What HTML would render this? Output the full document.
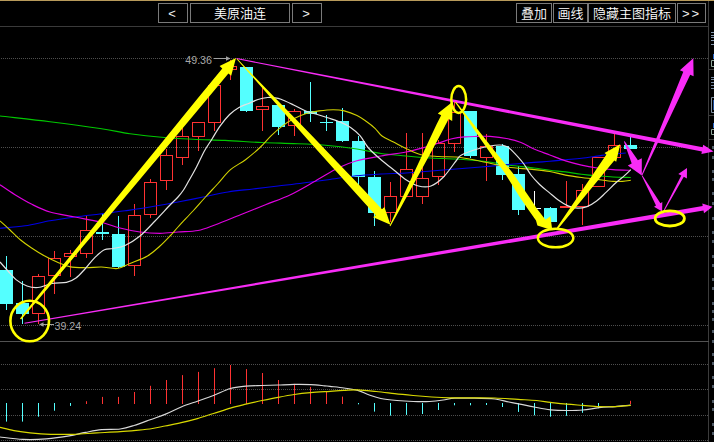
<!DOCTYPE html>
<html lang="zh"><head><meta charset="utf-8"><title>美原油连</title>
<style>
html,body{margin:0;padding:0;background:#000;overflow:hidden}
svg{display:block}
.cj{font-family:"Liberation Sans","Noto Sans CJK SC",sans-serif;font-size:13px;font-weight:350;fill:#fff}
.lat{font-family:"Liberation Sans","Noto Sans CJK SC",sans-serif;font-size:13px;fill:#f0f0f0;letter-spacing:2px}
.num{font-family:"Liberation Sans","Noto Sans CJK SC",sans-serif;font-size:10.67px;fill:#a8a8a8}
</style></head><body>
<svg width="714" height="442" viewBox="0 0 714 442">
<rect x="0" y="0" width="714" height="442" fill="#000"/>
<rect x="0" y="0" width="714" height="1" fill="#b89a5a"/>
<rect x="0" y="26" width="709" height="1" fill="#3a3a3a"/>
<rect x="708" y="1" width="1" height="441" fill="#3c3c3c"/>
<rect x="0" y="341" width="709" height="1" fill="#525252"/>
<line x1="1" y1="58.5" x2="708" y2="58.5" stroke="#4e4e4e" stroke-width="1" stroke-dasharray="1 1" shape-rendering="crispEdges"/>
<line x1="1" y1="147.5" x2="708" y2="147.5" stroke="#4e4e4e" stroke-width="1" stroke-dasharray="1 1" shape-rendering="crispEdges"/>
<line x1="1" y1="236.5" x2="708" y2="236.5" stroke="#4e4e4e" stroke-width="1" stroke-dasharray="1 1" shape-rendering="crispEdges"/>
<line x1="1" y1="325.5" x2="708" y2="325.5" stroke="#4e4e4e" stroke-width="1" stroke-dasharray="1 1" shape-rendering="crispEdges"/>
<line x1="1" y1="364.5" x2="708" y2="364.5" stroke="#4e4e4e" stroke-width="1" stroke-dasharray="1 1" shape-rendering="crispEdges"/>
<line x1="1" y1="389.5" x2="708" y2="389.5" stroke="#4e4e4e" stroke-width="1" stroke-dasharray="1 1" shape-rendering="crispEdges"/>
<line x1="1" y1="415.5" x2="708" y2="415.5" stroke="#4e4e4e" stroke-width="1" stroke-dasharray="1 1" shape-rendering="crispEdges"/>
<line x1="1" y1="440.5" x2="708" y2="440.5" stroke="#4e4e4e" stroke-width="1" stroke-dasharray="1 1" shape-rendering="crispEdges"/>
<rect x="709" y="69" width="5" height="1" fill="#3c3c3c"/>
<rect x="709" y="115" width="5" height="1" fill="#3c3c3c"/>
<rect x="709" y="139" width="5" height="1" fill="#3c3c3c"/>
<rect x="711" y="32" width="3" height="1" fill="#8396ad"/>
<rect x="711" y="35" width="3" height="1" fill="#8396ad"/>
<rect x="711" y="37" width="3" height="1" fill="#8396ad"/>
<rect x="711" y="40" width="3" height="1" fill="#8396ad"/>
<rect x="711" y="44" width="3" height="1" fill="#8396ad"/>
<rect x="713" y="54" width="1" height="5" fill="#2464c8"/>
<path d="M714 60.5H711.5V66.5H714" fill="none" stroke="#8fa79b" stroke-width="1"/>
<rect x="711" y="77" width="3" height="1" fill="#7386a0"/>
<rect x="711" y="79" width="3" height="1" fill="#7386a0"/>
<rect x="711" y="82" width="3" height="1" fill="#7386a0"/>
<rect x="711" y="85" width="3" height="1" fill="#7386a0"/>
<rect x="711" y="88" width="3" height="1" fill="#7386a0"/>
<path d="M714 97.5H711.5V112.5H714" fill="none" stroke="#7f8f9f" stroke-width="1"/>
<rect x="713" y="100" width="1" height="10" fill="#1c4c9c"/>
<rect x="713" y="123" width="1" height="5" fill="#2464c8"/>
<path d="M714 129.5H711.5V134.5H714" fill="none" stroke="#8fa79b" stroke-width="1"/>
<rect x="712" y="146" width="2" height="3" fill="#4d5864"/>
<rect x="712" y="156" width="2" height="3" fill="#4d5864"/>
<rect x="712" y="170" width="2" height="3" fill="#4d5864"/>
<rect x="712" y="178" width="2" height="3" fill="#4d5864"/>
<rect x="712" y="192" width="2" height="3" fill="#4d5864"/>
<rect x="712" y="202" width="2" height="3" fill="#4d5864"/>
<rect x="712" y="217" width="2" height="3" fill="#4d5864"/>
<rect x="712" y="231" width="2" height="3" fill="#4d5864"/>
<rect x="712" y="240" width="2" height="3" fill="#4d5864"/>
<rect x="712" y="255" width="2" height="3" fill="#4d5864"/>
<rect x="712" y="264" width="2" height="3" fill="#4d5864"/>
<rect x="712" y="278" width="2" height="3" fill="#4d5864"/>
<rect x="712" y="287" width="2" height="3" fill="#4d5864"/>
<rect x="712" y="302" width="2" height="3" fill="#4d5864"/>
<rect x="712" y="310" width="2" height="3" fill="#4d5864"/>
<rect x="712" y="318" width="2" height="3" fill="#4d5864"/>
<rect x="712" y="330" width="2" height="3" fill="#4d5864"/>
<rect x="712" y="340" width="2" height="3" fill="#4d5864"/>
<rect x="712" y="353" width="2" height="3" fill="#4d5864"/>
<rect x="712" y="362" width="2" height="3" fill="#4d5864"/>
<rect x="712" y="376" width="2" height="3" fill="#4d5864"/>
<rect x="712" y="385" width="2" height="3" fill="#4d5864"/>
<rect x="712" y="400" width="2" height="3" fill="#4d5864"/>
<rect x="712" y="408" width="2" height="3" fill="#4d5864"/>
<rect x="712" y="423" width="2" height="3" fill="#4d5864"/>
<rect x="712" y="432" width="2" height="3" fill="#4d5864"/>
<rect x="158.5" y="3.5" width="29.0" height="19" fill="none" stroke="#7a7a7a" stroke-width="1"/>
<text class="lat" x="173.0" y="18" text-anchor="middle">&lt;</text>
<rect x="190.5" y="3.5" width="99.0" height="19" fill="none" stroke="#7a7a7a" stroke-width="1"/>
<text class="cj" x="240.0" y="18" text-anchor="middle">美原油连</text>
<rect x="292.5" y="3.5" width="29.0" height="19" fill="none" stroke="#7a7a7a" stroke-width="1"/>
<text class="lat" x="307.0" y="18" text-anchor="middle">&gt;</text>
<rect x="516.5" y="3.5" width="35.0" height="19" fill="none" stroke="#7a7a7a" stroke-width="1"/>
<text class="cj" x="534.0" y="18" text-anchor="middle">叠加</text>
<rect x="553.5" y="3.5" width="34.0" height="19" fill="none" stroke="#7a7a7a" stroke-width="1"/>
<text class="cj" x="570.5" y="18" text-anchor="middle">画线</text>
<rect x="588.5" y="3.5" width="87.0" height="19" fill="none" stroke="#7a7a7a" stroke-width="1"/>
<text class="cj" x="632.0" y="18" text-anchor="middle">隐藏主图指标</text>
<rect x="677.5" y="3.5" width="28.0" height="19" fill="none" stroke="#7a7a7a" stroke-width="1"/>
<text class="lat" x="691.5" y="18" text-anchor="middle">&gt;&gt;</text>
<rect x="6.0" y="256.0" width="1" height="54.0" fill="#54ffff"/>
<rect x="0.0" y="270.0" width="13" height="34.0" fill="#54ffff"/>
<rect x="22.0" y="281.0" width="1" height="43.0" fill="#54ffff"/>
<rect x="16.0" y="303.0" width="13" height="11.0" fill="#54ffff"/>
<rect x="38.0" y="274.0" width="1" height="2.0" fill="#ff3232"/>
<rect x="38.0" y="314.0" width="1" height="10.0" fill="#ff3232"/>
<rect x="32.5" y="276.5" width="12" height="37.0" fill="none" stroke="#ff3232" stroke-width="1"/>
<rect x="54.0" y="251.0" width="1" height="7.0" fill="#ff3232"/>
<rect x="54.0" y="276.0" width="1" height="18.0" fill="#ff3232"/>
<rect x="48.5" y="258.5" width="12" height="17.0" fill="none" stroke="#ff3232" stroke-width="1"/>
<rect x="70.0" y="250.0" width="1" height="3.0" fill="#ff3232"/>
<rect x="70.0" y="257.0" width="1" height="20.0" fill="#ff3232"/>
<rect x="64.5" y="253.5" width="12" height="3.0" fill="none" stroke="#ff3232" stroke-width="1"/>
<rect x="86.0" y="216.0" width="1" height="14.0" fill="#ff3232"/>
<rect x="86.0" y="254.0" width="1" height="4.0" fill="#ff3232"/>
<rect x="80.5" y="230.5" width="12" height="23.0" fill="none" stroke="#ff3232" stroke-width="1"/>
<rect x="102.0" y="214.0" width="1" height="26.0" fill="#54ffff"/>
<rect x="96.0" y="232.0" width="13" height="2.0" fill="#54ffff"/>
<rect x="118.0" y="216.0" width="1" height="52.0" fill="#54ffff"/>
<rect x="112.0" y="234.0" width="13" height="33.0" fill="#54ffff"/>
<rect x="134.0" y="204.0" width="1" height="11.0" fill="#ff3232"/>
<rect x="134.0" y="266.0" width="1" height="10.0" fill="#ff3232"/>
<rect x="128.5" y="215.5" width="12" height="50.0" fill="none" stroke="#ff3232" stroke-width="1"/>
<rect x="150.0" y="179.0" width="1" height="3.0" fill="#ff3232"/>
<rect x="150.0" y="215.0" width="1" height="3.0" fill="#ff3232"/>
<rect x="144.5" y="182.5" width="12" height="32.0" fill="none" stroke="#ff3232" stroke-width="1"/>
<rect x="166.0" y="149.0" width="1" height="6.0" fill="#ff3232"/>
<rect x="166.0" y="181.0" width="1" height="9.0" fill="#ff3232"/>
<rect x="160.5" y="155.5" width="12" height="25.0" fill="none" stroke="#ff3232" stroke-width="1"/>
<rect x="182.0" y="128.0" width="1" height="8.0" fill="#ff3232"/>
<rect x="182.0" y="158.0" width="1" height="7.0" fill="#ff3232"/>
<rect x="176.5" y="136.5" width="12" height="21.0" fill="none" stroke="#ff3232" stroke-width="1"/>
<rect x="198.0" y="137.0" width="1" height="14.0" fill="#ff3232"/>
<rect x="192.5" y="122.5" width="12" height="14.0" fill="none" stroke="#ff3232" stroke-width="1"/>
<rect x="214.0" y="81.0" width="1" height="4.0" fill="#ff3232"/>
<rect x="214.0" y="123.0" width="1" height="8.0" fill="#ff3232"/>
<rect x="208.5" y="85.5" width="12" height="37.0" fill="none" stroke="#ff3232" stroke-width="1"/>
<rect x="230.0" y="60.0" width="1" height="6.0" fill="#ff3232"/>
<rect x="230.0" y="70.0" width="1" height="10.0" fill="#ff3232"/>
<rect x="224.5" y="66.5" width="12" height="3.0" fill="none" stroke="#ff3232" stroke-width="1"/>
<rect x="246.0" y="67.0" width="1" height="45.0" fill="#54ffff"/>
<rect x="240.0" y="67.0" width="13" height="44.0" fill="#54ffff"/>
<rect x="262.0" y="86.0" width="1" height="20.0" fill="#ff3232"/>
<rect x="262.0" y="110.0" width="1" height="21.0" fill="#ff3232"/>
<rect x="256.5" y="106.5" width="12" height="3.0" fill="none" stroke="#ff3232" stroke-width="1"/>
<rect x="278.0" y="105.0" width="1" height="30.0" fill="#54ffff"/>
<rect x="272.0" y="105.0" width="13" height="22.0" fill="#54ffff"/>
<rect x="294.0" y="109.0" width="1" height="2.0" fill="#ff3232"/>
<rect x="294.0" y="126.0" width="1" height="10.0" fill="#ff3232"/>
<rect x="288.5" y="111.5" width="12" height="14.0" fill="none" stroke="#ff3232" stroke-width="1"/>
<rect x="310.0" y="82.0" width="1" height="40.0" fill="#54ffff"/>
<rect x="304.0" y="111.0" width="13" height="3.0" fill="#54ffff"/>
<rect x="326.0" y="115.0" width="1" height="16.0" fill="#54ffff"/>
<rect x="320.0" y="122.0" width="13" height="1.0" fill="#54ffff"/>
<rect x="342.0" y="108.0" width="1" height="34.0" fill="#54ffff"/>
<rect x="336.0" y="121.0" width="13" height="20.0" fill="#54ffff"/>
<rect x="358.0" y="136.0" width="1" height="49.0" fill="#54ffff"/>
<rect x="352.0" y="141.0" width="13" height="36.0" fill="#54ffff"/>
<rect x="374.0" y="171.0" width="1" height="55.0" fill="#54ffff"/>
<rect x="368.0" y="177.0" width="13" height="36.0" fill="#54ffff"/>
<rect x="390.0" y="182.0" width="1" height="14.0" fill="#ff3232"/>
<rect x="390.0" y="213.0" width="1" height="9.0" fill="#ff3232"/>
<rect x="384.5" y="196.5" width="12" height="16.0" fill="none" stroke="#ff3232" stroke-width="1"/>
<rect x="406.0" y="133.0" width="1" height="36.0" fill="#ff3232"/>
<rect x="400.5" y="169.5" width="12" height="27.0" fill="none" stroke="#ff3232" stroke-width="1"/>
<rect x="422.0" y="133.0" width="1" height="45.0" fill="#ff3232"/>
<rect x="422.0" y="197.0" width="1" height="7.0" fill="#ff3232"/>
<rect x="416.5" y="178.5" width="12" height="18.0" fill="none" stroke="#ff3232" stroke-width="1"/>
<rect x="438.0" y="140.0" width="1" height="3.0" fill="#ff3232"/>
<rect x="438.0" y="177.0" width="1" height="8.0" fill="#ff3232"/>
<rect x="432.5" y="143.5" width="12" height="33.0" fill="none" stroke="#ff3232" stroke-width="1"/>
<rect x="454.0" y="102.0" width="1" height="10.0" fill="#ff3232"/>
<rect x="454.0" y="144.0" width="1" height="8.0" fill="#ff3232"/>
<rect x="448.5" y="112.5" width="12" height="31.0" fill="none" stroke="#ff3232" stroke-width="1"/>
<rect x="470.0" y="111.0" width="1" height="47.0" fill="#54ffff"/>
<rect x="464.0" y="111.0" width="13" height="45.0" fill="#54ffff"/>
<rect x="486.0" y="134.0" width="1" height="12.0" fill="#ff3232"/>
<rect x="486.0" y="158.0" width="1" height="23.0" fill="#ff3232"/>
<rect x="480.5" y="146.5" width="12" height="11.0" fill="none" stroke="#ff3232" stroke-width="1"/>
<rect x="502.0" y="144.0" width="1" height="36.0" fill="#54ffff"/>
<rect x="496.0" y="146.0" width="13" height="29.0" fill="#54ffff"/>
<rect x="518.0" y="166.0" width="1" height="49.0" fill="#54ffff"/>
<rect x="512.0" y="174.0" width="13" height="36.0" fill="#54ffff"/>
<rect x="534.0" y="191.0" width="1" height="27.0" fill="#fff"/>
<rect x="528.0" y="208.0" width="13" height="1" fill="#fff"/>
<rect x="550.0" y="207.0" width="1" height="15.0" fill="#54ffff"/>
<rect x="544.0" y="208.0" width="13" height="14.0" fill="#54ffff"/>
<rect x="566.0" y="181.0" width="1" height="25.0" fill="#ff3232"/>
<rect x="560.5" y="206.5" width="12" height="1.0" fill="none" stroke="#ff3232" stroke-width="1"/>
<rect x="582.0" y="184.0" width="1" height="6.0" fill="#ff3232"/>
<rect x="582.0" y="207.0" width="1" height="18.0" fill="#ff3232"/>
<rect x="576.5" y="190.5" width="12" height="16.0" fill="none" stroke="#ff3232" stroke-width="1"/>
<rect x="592.5" y="157.5" width="12" height="29.0" fill="none" stroke="#ff3232" stroke-width="1"/>
<rect x="614.0" y="133.0" width="1" height="12.0" fill="#ff3232"/>
<rect x="608.5" y="145.5" width="12" height="12.0" fill="none" stroke="#ff3232" stroke-width="1"/>
<rect x="630.0" y="136.0" width="1" height="13.0" fill="#54ffff"/>
<rect x="624.0" y="145.0" width="13" height="4.0" fill="#54ffff"/>
<path d="M0.0 116.0C8.3 117.0 33.3 119.6 50.0 121.7C66.7 123.8 86.7 126.5 100.0 128.5C113.3 130.5 119.7 132.2 130.0 133.7C140.3 135.1 151.0 136.3 161.6 137.2C172.2 138.1 182.7 138.8 193.3 139.3C203.9 139.8 213.6 139.9 225.0 140.4C236.4 140.9 250.6 142.0 262.0 142.5C273.4 143.0 283.1 143.2 293.6 143.6C304.2 144.0 314.7 144.3 325.3 145.2C335.9 146.1 347.7 147.6 357.0 149.0C366.3 150.4 372.8 152.3 381.0 153.5C389.2 154.7 397.7 155.2 406.0 156.0C414.3 156.8 422.7 157.5 431.0 158.0C439.3 158.5 447.7 158.5 456.0 159.0C464.3 159.5 472.7 160.1 481.0 161.0C489.3 161.9 497.2 163.5 506.0 164.7C514.8 165.9 526.7 167.1 534.0 168.0C541.3 168.9 544.5 169.7 549.8 170.3C555.1 171.0 560.3 171.2 565.6 171.9C570.9 172.6 576.2 173.6 581.5 174.3C586.8 175.0 592.0 175.5 597.3 175.9C602.5 176.3 607.4 176.7 613.0 177.0C618.6 177.3 627.8 177.4 630.8 177.5" fill="none" stroke="#00c800" stroke-width="1.10"/>
<path d="M0.0 228.3C4.2 227.9 16.7 227.1 25.0 225.8C33.3 224.6 41.7 222.3 50.0 220.8C58.3 219.3 66.7 218.1 75.0 217.0C83.3 215.9 91.7 215.0 100.0 214.0C108.3 213.0 116.7 212.0 125.0 210.8C133.3 209.6 141.2 208.5 150.0 207.0C158.8 205.5 169.2 203.7 178.0 202.0C186.8 200.3 194.7 198.7 203.0 197.0C211.3 195.3 219.7 193.3 228.0 192.0C236.3 190.7 244.7 190.0 253.0 189.0C261.3 188.0 269.7 187.0 278.0 186.0C286.3 185.0 294.7 184.1 303.0 183.0C311.3 181.9 319.2 180.9 328.0 179.7C336.8 178.5 347.2 176.8 356.0 175.8C364.8 174.9 372.7 174.5 381.0 174.0C389.3 173.5 397.7 173.5 406.0 173.0C414.3 172.5 422.7 171.7 431.0 171.0C439.3 170.3 447.7 169.7 456.0 169.0C464.3 168.3 472.7 167.7 481.0 167.0C489.3 166.3 497.2 165.5 506.0 164.7C514.8 163.9 526.7 163.0 534.0 162.4C541.3 161.8 544.5 161.8 549.8 161.3C555.1 160.9 560.3 160.2 565.6 159.7C570.9 159.2 576.2 158.8 581.5 158.2C586.8 157.6 592.8 156.7 597.3 156.1C601.8 155.5 603.6 155.0 608.4 154.5C613.1 154.0 622.9 153.2 625.8 153.0" fill="none" stroke="#0000e6" stroke-width="1.15"/>
<path d="M0.0 184.7C2.5 186.4 9.6 191.4 15.0 194.7C20.4 198.0 26.6 201.7 32.4 204.6C38.2 207.5 42.9 209.9 50.0 212.0C57.1 214.1 66.7 215.3 75.0 217.0C83.3 218.7 92.5 220.2 100.0 222.0C107.5 223.8 113.3 226.3 120.0 228.0C126.7 229.7 133.3 231.1 140.0 232.0C146.7 232.9 153.7 233.3 160.0 233.3C166.3 233.3 171.7 232.5 178.0 232.0C184.3 231.5 191.8 231.7 198.0 230.5C204.2 229.3 208.4 227.3 215.5 224.7C222.6 222.1 232.2 218.0 240.5 214.7C248.8 211.4 257.2 208.0 265.5 204.7C273.8 201.4 282.2 198.6 290.5 194.7C298.8 190.8 307.6 185.4 315.5 181.0C323.4 176.6 331.2 171.3 338.0 168.0C344.8 164.7 348.8 163.0 356.0 161.0C363.2 159.0 372.7 157.5 381.0 156.0C389.3 154.5 398.5 153.5 406.0 152.0C413.5 150.5 420.4 148.5 426.0 147.0C431.6 145.5 435.0 144.2 439.3 142.8C443.6 141.4 447.8 139.8 452.0 138.8C456.2 137.8 460.4 137.3 464.6 136.9C468.8 136.5 473.1 136.5 477.3 136.4C481.5 136.3 484.9 136.0 490.0 136.4C495.1 136.8 502.8 137.8 508.0 138.8C513.2 139.8 516.7 140.8 521.0 142.5C525.3 144.2 529.2 146.9 534.0 149.0C538.8 151.1 544.5 153.0 549.8 155.0C555.1 157.0 560.3 159.2 565.6 160.9C570.9 162.6 576.2 163.9 581.5 165.1C586.8 166.3 592.0 167.2 597.3 168.0C602.5 168.8 607.5 169.2 613.0 169.6C618.5 170.0 627.6 170.2 630.5 170.3" fill="none" stroke="#e000e0" stroke-width="1.15"/>
<path d="M0.0 221.0C1.7 222.5 6.6 226.8 10.0 230.0C13.4 233.2 17.0 237.0 20.6 240.0C24.2 243.0 27.7 245.4 31.6 248.0C35.5 250.6 40.1 253.5 44.3 255.8C48.5 258.1 52.8 260.2 57.0 262.0C61.2 263.8 64.9 265.7 69.6 266.6C74.3 267.6 80.1 267.6 85.4 267.7C90.7 267.8 96.0 266.9 101.3 267.0C106.6 267.1 112.7 269.1 117.5 268.5C122.3 267.9 125.0 265.6 130.0 263.5C135.0 261.4 142.5 258.9 147.5 256.0C152.5 253.1 156.2 249.3 160.0 246.0C163.8 242.7 167.0 239.2 170.0 236.0C173.0 232.8 174.2 231.2 178.0 227.0C181.8 222.8 188.4 216.0 193.0 211.0C197.6 206.0 201.3 201.6 205.5 197.0C209.7 192.4 213.8 188.1 218.0 183.5C222.2 178.9 225.9 173.7 230.5 169.7C235.1 165.7 240.5 163.5 245.5 159.7C250.5 155.9 256.2 151.1 260.5 147.0C264.8 142.9 267.8 138.9 271.5 135.4C275.2 131.9 278.9 128.7 282.6 125.9C286.3 123.1 289.7 120.9 293.6 118.8C297.6 116.7 302.1 114.8 306.3 113.5C310.5 112.2 314.5 111.5 319.0 110.9C323.5 110.3 329.0 109.7 333.2 109.7C337.4 109.7 340.3 109.9 344.3 110.9C348.3 111.9 353.3 113.8 357.0 115.6C360.7 117.4 363.4 119.4 366.4 121.5C369.4 123.6 372.4 125.9 375.0 128.3C377.6 130.7 378.9 133.7 382.0 136.0C385.1 138.3 389.5 139.9 393.5 142.0C397.5 144.1 401.4 146.4 406.0 148.5C410.6 150.6 415.6 153.4 421.0 154.7C426.4 156.0 432.7 156.1 438.5 156.5C444.3 156.9 450.2 156.5 456.0 157.0C461.8 157.5 467.7 158.6 473.5 159.7C479.3 160.8 485.6 162.3 491.0 163.5C496.4 164.7 498.8 166.0 506.0 167.0C513.2 168.0 526.7 168.8 534.0 169.6C541.3 170.3 544.5 170.6 549.8 171.5C555.1 172.4 560.3 174.1 565.6 175.1C570.9 176.1 576.2 176.8 581.5 177.5C586.8 178.2 592.0 178.8 597.3 179.4C602.5 180.1 608.8 181.1 613.0 181.4C617.2 181.7 619.6 181.6 622.6 181.4C625.6 181.2 629.4 180.5 630.8 180.3" fill="none" stroke="#d2d200" stroke-width="1.10"/>
<path d="M0.0 262.0C1.3 263.5 5.3 268.1 8.0 271.0C10.7 273.9 12.8 277.1 16.0 279.6C19.2 282.1 23.3 284.7 27.0 286.0C30.7 287.3 33.8 287.9 38.0 287.5C42.2 287.1 47.2 284.4 52.0 283.5C56.8 282.6 62.5 283.3 66.5 282.4C70.5 281.5 72.8 280.3 76.0 278.0C79.2 275.7 82.2 271.9 85.4 268.5C88.6 265.1 91.8 260.5 95.0 257.4C98.2 254.3 101.4 251.3 104.4 249.8C107.4 248.3 109.6 249.2 113.0 248.5C116.4 247.8 120.5 247.6 125.0 245.5C129.5 243.4 135.0 240.1 140.0 236.0C145.0 231.9 150.0 226.2 155.0 221.0C160.0 215.8 166.2 209.0 170.0 205.0C173.8 201.0 175.8 199.5 178.0 197.0C180.2 194.5 181.6 192.8 183.5 190.0C185.4 187.2 187.1 183.8 189.3 180.0C191.5 176.2 194.0 171.8 196.5 167.0C199.0 162.2 201.8 155.8 204.4 151.0C207.0 146.2 209.7 142.7 212.3 138.5C214.9 134.3 217.3 129.8 220.2 125.8C223.1 121.8 226.5 117.6 229.6 114.5C232.7 111.4 235.8 109.2 239.0 107.4C242.2 105.6 245.4 104.8 248.6 103.5C251.8 102.2 254.8 100.5 258.0 99.5C261.2 98.5 264.9 97.8 267.6 97.5C270.3 97.2 271.8 97.5 274.0 97.8C276.2 98.1 277.7 98.1 281.0 99.3C284.3 100.5 289.4 103.0 293.6 105.0C297.8 107.0 302.3 109.7 306.3 111.3C310.3 112.9 313.7 113.4 317.4 114.5C321.1 115.6 324.6 116.7 328.5 118.0C332.4 119.3 337.3 120.8 341.0 122.4C344.7 124.0 347.4 125.3 350.6 127.5C353.8 129.7 357.0 132.3 360.0 135.7C363.0 139.1 365.0 144.0 368.5 148.0C372.0 152.0 376.8 156.1 381.0 159.7C385.2 163.3 389.3 166.4 393.5 169.7C397.7 173.0 401.8 177.0 406.0 179.7C410.2 182.4 414.3 184.9 418.5 186.0C422.7 187.1 426.8 187.5 431.0 186.0C435.2 184.5 439.3 181.2 443.5 177.0C447.7 172.8 453.0 164.7 456.0 161.0C459.0 157.3 457.9 157.0 461.5 155.0C465.1 153.0 472.6 150.5 477.3 149.0C482.1 147.5 486.3 146.7 490.0 146.0C493.7 145.3 496.7 145.0 499.4 145.0C502.1 145.0 504.1 145.4 506.0 146.2C507.9 147.0 508.1 146.8 511.0 149.7C513.9 152.6 520.2 159.3 523.5 163.5C526.8 167.7 528.3 171.5 531.0 175.0C533.7 178.5 536.6 181.6 539.6 184.5C542.6 187.4 545.8 189.8 549.0 192.4C552.2 195.0 555.4 198.1 558.6 200.3C561.8 202.6 564.8 204.6 568.0 205.9C571.2 207.2 574.4 208.1 577.6 208.2C580.8 208.3 583.8 207.8 587.0 206.6C590.2 205.4 593.4 203.4 596.6 201.0C599.8 198.6 602.8 195.4 606.0 192.4C609.2 189.4 612.6 185.8 615.6 183.0C618.6 180.2 621.7 178.1 624.2 175.9C626.7 173.7 629.7 170.7 630.8 169.6" fill="none" stroke="#e2e2e2" stroke-width="1.20"/>
<text class="num" x="185.3" y="64">49.36</text>
<path d="M214 58.5H230" stroke="#a0a0a0" stroke-width="1" fill="none"/><polygon points="226,56.3 230.5,58.5 226,60.7" fill="#a0a0a0"/>
<text class="num" x="54.5" y="330">39.24</text>
<path d="M40 324.5H54" stroke="#a0a0a0" stroke-width="1" fill="none"/><polygon points="43.5,322.3 39,324.5 43.5,326.7" fill="#a0a0a0"/>
<rect x="6.0" y="403.0" width="1" height="18.6" fill="#54ffff"/>
<rect x="22.0" y="403.0" width="1" height="18.6" fill="#54ffff"/>
<rect x="38.0" y="403.0" width="1" height="13.7" fill="#54ffff"/>
<rect x="54.0" y="403.0" width="1" height="7.7" fill="#54ffff"/>
<rect x="70.0" y="403.0" width="1" height="2.9" fill="#54ffff"/>
<rect x="86.0" y="401.2" width="1" height="2.8" fill="#ff3232"/>
<rect x="102.0" y="396.9" width="1" height="7.1" fill="#ff3232"/>
<rect x="118.0" y="396.9" width="1" height="7.1" fill="#ff3232"/>
<rect x="134.0" y="392.0" width="1" height="12.0" fill="#ff3232"/>
<rect x="150.0" y="385.8" width="1" height="18.2" fill="#ff3232"/>
<rect x="166.0" y="380.0" width="1" height="24.0" fill="#ff3232"/>
<rect x="182.0" y="375.1" width="1" height="28.9" fill="#ff3232"/>
<rect x="198.0" y="371.9" width="1" height="32.1" fill="#ff3232"/>
<rect x="214.0" y="368.2" width="1" height="35.8" fill="#ff3232"/>
<rect x="230.0" y="365.0" width="1" height="39.0" fill="#ff3232"/>
<rect x="246.0" y="369.1" width="1" height="34.9" fill="#ff3232"/>
<rect x="262.0" y="373.0" width="1" height="31.0" fill="#ff3232"/>
<rect x="278.0" y="380.0" width="1" height="24.0" fill="#ff3232"/>
<rect x="294.0" y="383.9" width="1" height="20.1" fill="#ff3232"/>
<rect x="310.0" y="386.9" width="1" height="17.1" fill="#ff3232"/>
<rect x="326.0" y="392.0" width="1" height="12.0" fill="#ff3232"/>
<rect x="342.0" y="396.6" width="1" height="7.4" fill="#ff3232"/>
<rect x="358.0" y="403.0" width="1" height="1.3" fill="#54ffff"/>
<rect x="374.0" y="403.0" width="1" height="8.6" fill="#54ffff"/>
<rect x="390.0" y="403.0" width="1" height="12.6" fill="#54ffff"/>
<rect x="406.0" y="403.0" width="1" height="11.9" fill="#54ffff"/>
<rect x="422.0" y="403.0" width="1" height="11.0" fill="#54ffff"/>
<rect x="438.0" y="403.0" width="1" height="7.0" fill="#54ffff"/>
<rect x="454.0" y="403.0" width="1" height="2.3" fill="#54ffff"/>
<rect x="470.0" y="403.0" width="1" height="2.3" fill="#54ffff"/>
<rect x="486.0" y="403.0" width="1" height="2.0" fill="#54ffff"/>
<rect x="502.0" y="403.0" width="1" height="4.0" fill="#54ffff"/>
<rect x="518.0" y="403.0" width="1" height="8.9" fill="#54ffff"/>
<rect x="534.0" y="403.0" width="1" height="12.3" fill="#54ffff"/>
<rect x="550.0" y="403.0" width="1" height="13.7" fill="#54ffff"/>
<rect x="566.0" y="403.0" width="1" height="12.8" fill="#54ffff"/>
<rect x="582.0" y="403.0" width="1" height="9.8" fill="#54ffff"/>
<rect x="598.0" y="403.0" width="1" height="5.2" fill="#54ffff"/>
<rect x="630.0" y="400.8" width="1" height="3.2" fill="#ff3232"/>
<path d="M0.0 437.0C3.8 437.4 15.3 439.1 23.0 439.4C30.7 439.7 38.5 439.5 46.2 438.9C53.9 438.3 62.8 437.0 69.3 435.9C75.8 434.8 80.1 433.4 85.5 432.4C90.9 431.4 95.9 430.3 101.7 429.7C107.5 429.1 114.8 429.7 120.2 429.0C125.6 428.3 129.0 427.1 134.0 425.5C139.0 423.9 145.0 421.6 150.2 419.7C155.4 417.8 159.8 416.5 165.0 414.4C170.2 412.3 175.8 409.2 181.2 407.0C186.6 404.8 192.0 403.1 197.4 401.2C202.8 399.3 208.0 397.6 213.5 395.5C219.0 393.4 225.0 390.1 230.4 388.5C235.8 386.9 240.6 386.7 245.9 386.2C251.2 385.7 256.6 385.7 262.0 385.5C267.4 385.3 272.8 385.2 278.2 385.0C283.6 384.8 289.0 384.5 294.4 384.4C299.8 384.3 305.6 384.4 310.6 384.6C315.6 384.8 321.3 385.5 324.5 385.8C327.7 386.1 326.8 385.9 330.0 386.3C333.2 386.7 339.3 387.3 343.9 388.0C348.5 388.7 353.5 389.2 357.7 390.4C361.9 391.6 365.4 393.6 369.3 395.0C373.2 396.4 376.2 397.6 380.8 398.5C385.4 399.4 391.6 400.0 397.0 400.5C402.4 401.0 407.8 401.3 413.2 401.5C418.6 401.7 424.4 401.8 429.4 401.5C434.4 401.2 439.0 400.6 443.2 400.0C447.4 399.4 449.8 398.5 454.8 398.2C459.8 397.9 466.6 398.1 473.3 398.2C480.0 398.3 489.1 398.4 495.0 399.0C500.9 399.6 504.3 401.1 508.9 402.0C513.5 402.9 518.1 403.8 522.7 404.7C527.3 405.6 532.0 406.6 536.6 407.5C541.2 408.4 545.5 409.3 550.5 409.8C555.5 410.3 561.2 410.5 566.6 410.5C572.0 410.5 577.4 410.5 582.8 410.0C588.2 409.5 593.6 408.3 599.0 407.7C604.4 407.1 609.9 407.0 615.2 406.6C620.5 406.2 628.1 405.4 630.7 405.2" fill="none" stroke="#d8d8d8" stroke-width="1.20"/>
<path d="M0.0 427.4C2.3 427.9 8.9 429.7 13.9 430.6C18.9 431.5 23.9 432.3 30.0 432.9C36.1 433.5 43.5 434.1 50.8 434.3C58.1 434.5 66.3 434.5 74.0 434.3C81.7 434.1 89.3 433.3 97.0 432.9C104.7 432.5 113.2 432.2 120.2 431.7C127.2 431.2 133.3 430.6 138.7 430.1C144.1 429.6 148.1 429.2 152.5 428.5C156.9 427.8 160.2 427.0 165.0 426.0C169.8 425.0 175.8 423.9 181.2 422.7C186.6 421.5 192.0 420.1 197.4 418.6C202.8 417.1 208.0 415.2 213.5 413.5C219.0 411.8 225.0 409.8 230.4 408.2C235.8 406.6 240.6 405.5 245.9 404.2C251.2 402.9 256.6 401.6 262.0 400.5C267.4 399.4 272.8 398.3 278.2 397.3C283.6 396.3 289.0 395.3 294.4 394.5C299.8 393.7 304.7 393.2 310.6 392.7C316.5 392.2 324.4 391.7 330.0 391.3C335.6 390.9 339.3 390.6 343.9 390.4C348.5 390.2 352.3 389.7 357.7 389.9C363.1 390.1 370.0 390.9 376.2 391.5C382.4 392.1 388.5 392.9 394.7 393.6C400.9 394.3 407.0 394.9 413.2 395.5C419.4 396.1 425.5 396.6 431.7 397.0C437.9 397.4 443.3 397.7 450.2 397.8C457.1 397.9 465.8 397.8 473.3 397.8C480.8 397.8 487.5 397.7 495.0 398.0C502.5 398.3 511.2 399.0 518.1 399.4C525.0 399.8 531.2 400.0 536.6 400.5C542.0 401.0 545.5 401.8 550.5 402.4C555.5 403.0 561.2 403.7 566.6 404.2C572.0 404.7 577.4 405.0 582.8 405.4C588.2 405.8 593.6 406.4 599.0 406.6C604.4 406.8 609.9 406.8 615.2 406.6C620.5 406.4 628.1 405.6 630.7 405.4" fill="none" stroke="#d8d800" stroke-width="1.20"/>
<polygon fill="#f82cf6" points="236.4,59.1 701.9,151.6 701.4,154.1 713.6,151.6 703.2,144.7 702.7,147.2 236.6,58.1"/>
<polygon fill="#f82cf6" points="24.6,323.8 703.5,210.6 704.0,213.2 712.5,206.7 702.3,203.4 702.7,206.0 24.4,322.8"/>
<polygon fill="#f82cf6" points="623.9,141.6 631.7,163.4 627.8,165.4 641.8,175.5 641.8,158.2 637.9,160.2 624.7,141.2"/>
<polygon fill="#f82cf6" points="641.7,175.7 656.0,205.6 654.0,206.7 662.1,211.4 662.3,202.1 660.4,203.2 642.3,175.3"/>
<polygon fill="#f82cf6" points="642.4,175.2 690.2,74.8 693.6,76.2 693.3,58.3 679.9,70.2 683.3,71.7 641.6,174.8"/>
<polygon fill="#f82cf6" points="664.7,210.2 683.8,176.8 686.9,178.5 687.0,168.0 678.3,173.9 681.3,175.5 663.9,209.8"/>
<polygon fill="#ffff00" points="21.2,319.5 41.5,295.8 64.4,268.7 83.3,246.1 106.0,219.7 135.0,185.3 162.8,152.0 204.2,102.4 228.4,73.4 231.2,75.7 236.0,58.0 219.6,66.1 222.3,68.4 198.4,97.6 157.6,147.7 130.2,181.3 101.9,216.3 80.2,243.6 61.7,266.5 39.4,294.1 20.0,318.5"/>
<polygon fill="#ffff00" points="236.7,59.3 254.8,79.5 279.1,107.2 307.8,139.7 332.7,167.5 350.8,187.7 375.6,215.2 373.2,217.3 390.5,224.8 384.4,207.0 382.0,209.2 356.6,182.3 337.8,162.7 312.0,135.8 281.8,104.7 256.0,78.3 237.3,58.7"/>
<polygon fill="#ffff00" points="390.4,226.2 398.4,211.9 414.9,181.7 433.9,146.9 443.7,128.5 448.6,119.0 452.2,120.9 452.6,101.8 437.8,113.6 441.2,115.3 436.4,124.8 427.5,143.7 410.8,179.6 396.4,210.8 389.6,225.8"/>
<polygon fill="#ffff00" points="455.0,102.3 488.2,150.0 504.6,172.7 519.2,196.3 527.0,207.7 536.0,220.5 537.4,225.4 552.3,230.2 550.4,216.2 545.5,219.8 536.2,207.7 531.3,200.0 512.5,172.7 493.8,150.0 456.0,101.7"/>
<polygon fill="#ffff00" points="557.1,230.0 614.3,160.4 616.2,161.8 620.2,144.2 604.5,153.1 606.4,154.5 555.9,229.0"/>
<ellipse cx="29.7" cy="321.0" rx="19.3" ry="20.2" fill="none" stroke="#ffff00" stroke-width="2.6"/>
<ellipse cx="458.7" cy="99.5" rx="7.4" ry="13.4" fill="none" stroke="#ffff00" stroke-width="2.5"/>
<ellipse cx="555.6" cy="238.0" rx="17.7" ry="9.3" fill="none" stroke="#ffff00" stroke-width="2.5"/>
<ellipse cx="669.8" cy="218.4" rx="14.6" ry="7.6" fill="none" stroke="#ffff00" stroke-width="2.8"/>
</svg>
</body></html>
